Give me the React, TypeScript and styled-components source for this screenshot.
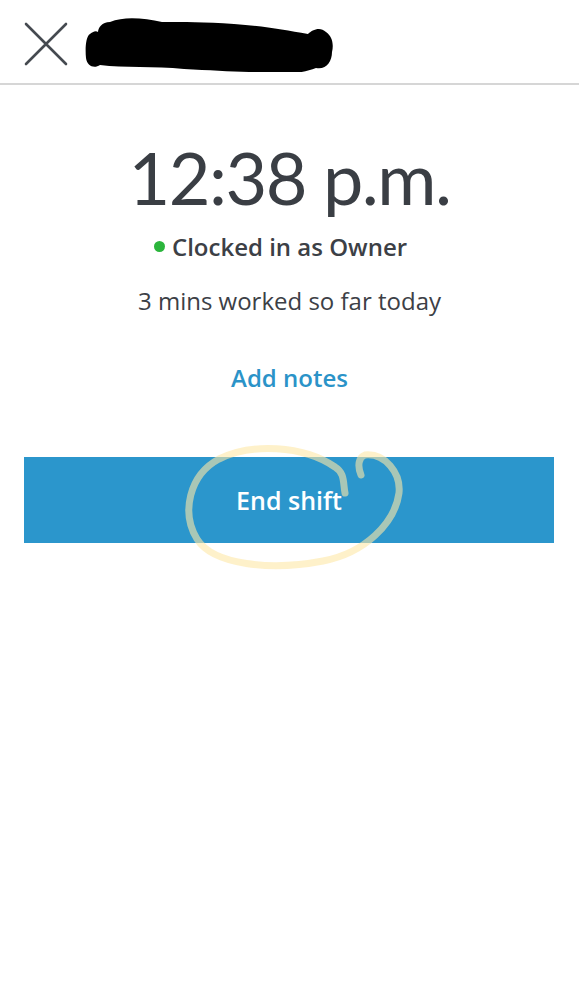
import styled, { createGlobalStyle } from "styled-components";

const GlobalStyle = createGlobalStyle`
  html, body {
    margin: 0;
    padding: 0;
    background: #ffffff;
  }
  body {
    font-family: "Open Sans", "Liberation Sans", sans-serif;
    color: #3c4046;
  }
`;

const Page = styled.div`
  width: 579px;
  min-height: 999px;
  background: #ffffff;
`;

const Header = styled.header`
  height: 85px;
  display: flex;
  align-items: center;
  gap: 14px;
  padding: 4px 0 0 22px;
  border-bottom: 2px solid #d6d6d6;
  box-sizing: border-box;
`;

const CloseButton = styled.button`
  width: 48px;
  height: 48px;
  padding: 0;
  border: 0;
  background: none;
  display: flex;
  align-items: center;
  justify-content: center;
  cursor: pointer;
`;

const Content = styled.main`
  display: flex;
  flex-direction: column;
  align-items: center;
  padding-top: 56px;
`;

const Time = styled.h1`
  margin: 0;
  font-family: Lato, "Open Sans", sans-serif;
  font-size: 72px;
  font-weight: 400;
  line-height: 1;
  letter-spacing: -1.5px;
  color: #3a3e44;
`;

/* the green dot hangs to the left of the centred text */
const Status = styled.div`
  position: relative;
  margin-top: 17px;
  font-size: 24px;
  font-weight: 600;
  color: #3c4046;

  &::before {
    content: "";
    position: absolute;
    left: -18px;
    top: 50%;
    width: 11px;
    height: 11px;
    margin-top: -6px;
    border-radius: 50%;
    background: #2bb53c;
  }
`;

const Worked = styled.p`
  margin: 21px 0 0;
  font-size: 24px;
  color: #3c4046;
`;

const NotesLink = styled.a`
  margin-top: 44px;
  font-size: 24px;
  font-weight: 600;
  color: #2b93c8;
  text-decoration: none;
  cursor: pointer;
`;

const ButtonArea = styled.div`
  position: relative;
  align-self: stretch;
  margin: 63px 25px 0 24px;
`;

const EndButton = styled.button`
  width: 100%;
  height: 86px;
  border: 0;
  background: #2b96cc;
  color: #ffffff;
  font-family: "Open Sans", "Liberation Sans", sans-serif;
  font-size: 25px;
  font-weight: 600;
  cursor: pointer;
`;

const Scribble = styled.svg`
  position: absolute;
  left: 155px;
  top: -14px;
  pointer-events: none;
`;

function Redaction() {
  return (
    <svg width="250" height="56" viewBox="0 0 250 56">
      <path
        d="M6 18 C2 20 1 32 2 42 C3 50 10 53 16 49 C40 52 70 50 100 53 C140 55 170 57 200 56 C210 58 222 56 232 52 C242 54 248 46 248 36 C250 28 248 20 242 16 C236 10 228 14 224 18 C200 14 180 10 150 8 C120 6 100 6 78 6 C60 2 40 0 26 6 C18 6 14 12 14 16 C12 14 8 16 6 18 Z"
        fill="#000000"
      />
    </svg>
  );
}

export default function App() {
  return (
    <Page>
      <GlobalStyle />
      <Header>
        <CloseButton aria-label="Close">
          <svg width="46" height="46" viewBox="0 0 46 46">
            <path
              d="M3 3 L43 43 M43 3 L3 43"
              stroke="#454a50"
              strokeWidth="2.6"
              strokeLinecap="round"
            />
          </svg>
        </CloseButton>
        <Redaction />
      </Header>
      <Content>
        <Time>12:38 p.m.</Time>
        <Status>Clocked in as Owner</Status>
        <Worked>3 mins worked so far today</Worked>
        <NotesLink>Add notes</NotesLink>
        <ButtonArea>
          <EndButton>End shift</EndButton>
          <Scribble width="250" height="130" viewBox="0 0 250 130">
            <path
              d="M166 50 C164 40 166 30 156 24 C124 2 72 0 40 16 C10 32 2 70 18 96 C34 122 92 128 144 118 C186 110 216 80 220 50 C222 30 206 10 186 12 C180 14 178 22 182 32"
              fill="none"
              stroke="#fde7a6"
              strokeOpacity="0.6"
              strokeWidth="7"
              strokeLinecap="round"
            />
          </Scribble>
        </ButtonArea>
      </Content>
    </Page>
  );
}
